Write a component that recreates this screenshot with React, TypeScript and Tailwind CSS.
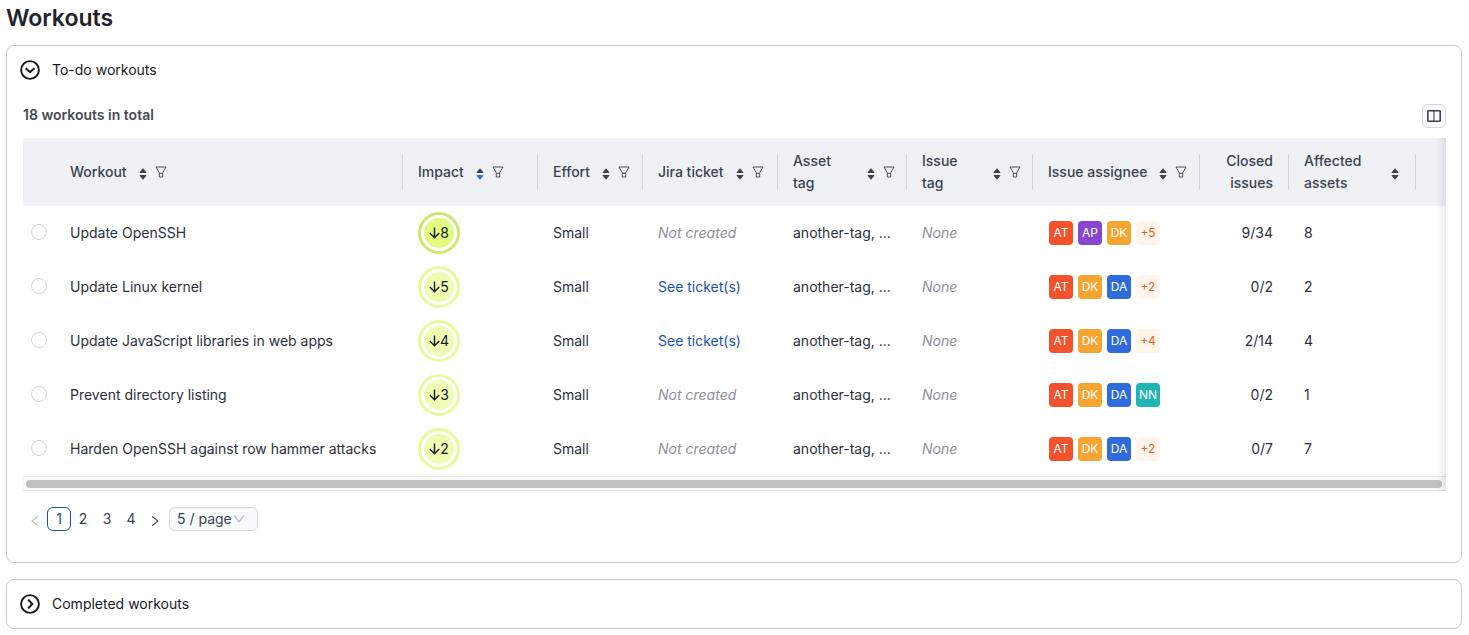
import React from "react";
import { AiOutlineLeft, AiOutlineRight, AiOutlineDown } from "react-icons/ai";

type Tone = "AT" | "AP" | "DK" | "DA" | "NN";

const TONES: Record<Tone, string> = {
  AT: "bg-[#f4522d]",
  AP: "bg-[#8746d2]",
  DK: "bg-[#f6a531]",
  DA: "bg-[#2f6bdb]",
  NN: "bg-[#1fb5b5]",
};

type Workout = {
  name: string;
  impact: number;
  ticket: boolean;
  people: Tone[];
  more?: number;
  closed: string;
  assets: number;
};

const WORKOUTS: Workout[] = [
  { name: "Update OpenSSH", impact: 8, ticket: false, people: ["AT", "AP", "DK"], more: 5, closed: "9/34", assets: 8 },
  { name: "Update Linux kernel", impact: 5, ticket: true, people: ["AT", "DK", "DA"], more: 2, closed: "0/2", assets: 2 },
  { name: "Update JavaScript libraries in web apps", impact: 4, ticket: true, people: ["AT", "DK", "DA"], more: 4, closed: "2/14", assets: 4 },
  { name: "Prevent directory listing", impact: 3, ticket: false, people: ["AT", "DK", "DA", "NN"], closed: "0/2", assets: 1 },
  { name: "Harden OpenSSH against row hammer attacks", impact: 2, ticket: false, people: ["AT", "DK", "DA"], more: 2, closed: "0/7", assets: 7 },
];

type Column = { label: string; width: string; sort?: boolean; filter?: boolean; sorted?: boolean; spread?: boolean; right?: boolean };

const COLUMNS: Column[] = [
  { label: "Workout", width: "w-auto", sort: true, filter: true },
  { label: "Impact", width: "w-[135px]", sort: true, filter: true, sorted: true },
  { label: "Effort", width: "w-[105px]", sort: true, filter: true },
  { label: "Jira ticket", width: "w-[135px]", sort: true, filter: true },
  { label: "Asset tag", width: "w-[129px]", sort: true, filter: true, spread: true },
  { label: "Issue tag", width: "w-[126px]", sort: true, filter: true, spread: true },
  { label: "Issue assignee", width: "w-[167px]", sort: true, filter: true },
  { label: "Closed issues", width: "w-[89px]", right: true },
  { label: "Affected assets", width: "w-[127px]", sort: true, spread: true },
];

function HeaderCell({ label, sort, filter, sorted, spread, right }: Column) {
  return (
    <th scope="col" className="h-[68px] p-0 font-medium">
      <div className={`flex h-9 items-center border-r border-[#d3d5da] pl-[15px] ${right ? "justify-end pr-[15px] text-right" : spread ? "justify-between pr-[11px]" : ""}`}>
        <span className={spread || right ? "w-[60px] leading-[22px]" : "whitespace-nowrap leading-[22px]"}>{label}</span>
        {(sort || filter) && (
          <span className={`flex items-center gap-2 ${spread ? "" : "ml-3"} ${filter ? "" : "pr-[5px]"}`}>
            {sort && (
              <button type="button" aria-label={`Sort by ${label}`} className="pt-[3px]">
                <svg viewBox="0 0 8 12" className="h-3 w-2" fill="currentColor" aria-hidden="true">
                  <path d="M4 0.5Q4.3 0.5 4.5 0.8L7.3 4.2Q7.7 4.9 7 5H1Q0.3 4.9 0.7 4.2L3.5 0.8Q3.7 0.5 4 0.5Z" />
                  <path className={sorted ? "text-[#2f6bdb]" : ""} fill="currentColor" d="M4 11.5Q4.3 11.5 4.5 11.2L7.3 7.8Q7.7 7.1 7 7H1Q0.3 7.1 0.7 7.8L3.5 11.2Q3.7 11.5 4 11.5Z" />
                </svg>
              </button>
            )}
            {filter && (
              <button type="button" aria-label={`Filter by ${label}`}>
                <svg viewBox="0 0 12 12" className="size-3" fill="none" stroke="currentColor" strokeLinejoin="round" aria-hidden="true">
                  <path d="M1 1H11L7.7 6.8V11H4.3V6.8ZM4.3 7.3H7.7" strokeWidth="0.9" />
                </svg>
              </button>
            )}
          </span>
        )}
      </div>
    </th>
  );
}

function Impact({ value }: { value: number }) {
  const strong = value >= 8;
  return (
    <span className={`flex size-[42px] items-center justify-center rounded-full border-3 p-[3px] ${strong ? "border-[#cbe86d]" : "border-[#e9fa9d]"}`}>
      <span className={`flex size-full items-center justify-center rounded-full text-[#16191f] ${strong ? "bg-[#e2fa7f]" : "bg-[#effcb4]"}`}>
        <svg viewBox="0 0 11 12" className="h-3 w-[11px]" fill="none" stroke="currentColor" strokeWidth="1.4" aria-hidden="true">
          <path d="M5.5 0.5V10.5M0.8 6L5.5 10.7L10.2 6" />
        </svg>
        {value}
      </span>
    </span>
  );
}

function Chevron({ open }: { open: boolean }) {
  return (
    <svg viewBox="0 0 20 20" className="size-5" fill="none" stroke="currentColor" strokeWidth="1.9" aria-hidden="true">
      <circle cx="10" cy="10" r="8.9" />
      <path strokeWidth="2.1" d={open ? "M5.6 8.2L10 12.2L14.4 8.2" : "M8.2 5.6L12.2 10L8.2 14.4"} />
    </svg>
  );
}

function Panel({ title, open, children }: { title: string; open: boolean; children?: React.ReactNode }) {
  return (
    <section className="rounded-lg border border-[#cbcbcd]">
      <button type="button" aria-expanded={open} className="flex h-12 w-full items-center gap-3 pl-[13px] text-left text-[#16191f]">
        <Chevron open={open} />
        {title}
      </button>
      {children}
    </section>
  );
}

export default function App() {
  return (
    <main className="pt-[2px] pr-[7px] pb-[6px] pl-[6px] font-[Inter,sans-serif] text-sm leading-[22px] text-[#2b303b]">
      <h1 className="mb-[11px] text-[23px] leading-8 font-semibold text-[#1f232b]">Workouts</h1>
      <div className="flex flex-col gap-4">
        <Panel title="To-do workouts" open>
          <div className="pr-[15px] pb-[31px] pl-4">
            <div className="flex items-start justify-between pt-[10px] pb-[10px]">
              <h2 className="font-semibold text-[#454a55]">18 workouts in total</h2>
              <button type="button" aria-label="Choose columns" className="flex size-6 items-center justify-center rounded-md border border-[#d3d5da] bg-[#f9fafc] text-[#3c424e]">
                <svg viewBox="0 0 14 12" className="h-3 w-3.5" fill="none" stroke="currentColor" strokeWidth="1.6" aria-hidden="true">
                  <rect x="0.8" y="0.8" width="12.4" height="10.4" rx="0.6" />
                  <path d="M7 1V11" strokeWidth="1.1" />
                </svg>
              </button>
            </div>
            <div className="relative">
              <table className="w-full table-fixed border-collapse text-left">
                <colgroup>
                  <col className="w-8" />
                  {COLUMNS.map((c) => (
                    <col key={c.label} className={c.width} />
                  ))}
                  <col className="w-[30px]" />
                </colgroup>
                <thead className="bg-[#eff1f5] text-[#3c424e]">
                  <tr>
                    <td className="p-0" />
                    {COLUMNS.map((c) => (
                      <HeaderCell key={c.label} {...c} />
                    ))}
                    <td className="p-0" />
                  </tr>
                </thead>
                <tbody>
                  {WORKOUTS.map((w) => (
                    <tr key={w.name} className="h-[54px]">
                      <td className="p-0 pb-0.5">
                        <input type="radio" name="workout" aria-label={w.name} className="ml-2 block size-4 appearance-none rounded-full border border-[#d3d5da] bg-white" />
                      </td>
                      <td className="truncate p-0 pl-[15px]">{w.name}</td>
                      <td className="p-0 pl-[15px]"><Impact value={w.impact} /></td>
                      <td className="p-0 pl-[15px]">Small</td>
                      <td className="p-0 pl-[15px]">
                        {w.ticket ? <a href="#tickets" className="text-[#1b53a8]">See ticket(s)</a> : <em className="text-[#8b8f97]">Not created</em>}
                      </td>
                      <td className="p-0 pl-[15px]">another-tag, ...</td>
                      <td className="p-0 pl-[15px]"><em className="text-[#8b8f97]">None</em></td>
                      <td className="p-0 pl-4">
                        <div className="flex gap-[5px] text-xs">
                          {w.people.map((p) => (
                            <span key={p} className={`flex size-6 items-center justify-center rounded-sm text-white ${TONES[p]}`}>{p}</span>
                          ))}
                          {w.more && <span className="flex size-6 items-center justify-center rounded-sm bg-[#fff5eb] text-[#d9682f]">+{w.more}</span>}
                        </div>
                      </td>
                      <td className="p-0 pr-4 text-right">{w.closed}</td>
                      <td className="p-0 pl-[15px]">{w.assets}</td>
                      <td className="p-0" />
                    </tr>
                  ))}
                </tbody>
              </table>
              <div className="flex h-[15px] items-center border-y border-[#e6e6e6] bg-[#fafafa] pr-1 pl-[3px]">
                <div className="h-2 w-full rounded-full bg-[#c1c1c1]" />
              </div>
              <div className="pointer-events-none absolute inset-y-0 right-0 w-[10px] bg-linear-to-r from-black/0 to-black/8" />
            </div>
            <nav aria-label="Pages" className="mt-4 flex items-center text-[#3c424e]">
              <button type="button" aria-label="Previous page" disabled className="flex size-6 items-center justify-center pt-1 text-[#b9bbc0]"><AiOutlineLeft className="size-[14px]" /></button>
              <button type="button" aria-current="page" className="size-6 rounded-md border border-[#1b53a8] leading-[22px] text-[#1b53a8]">1</button>
              <button type="button" className="size-6">2</button>
              <button type="button" className="size-6">3</button>
              <button type="button" className="size-6">4</button>
              <button type="button" aria-label="Next page" className="flex size-6 items-center justify-center pt-1"><AiOutlineRight className="size-[14px]" /></button>
              <div className="relative ml-[2px]">
                <select aria-label="Page size" className="block h-6 w-[89px] appearance-none rounded-md border border-[#d3d5da] bg-[#f9fafc] pl-[7px] leading-[22px]">
                  <option>5 / page</option>
                </select>
                <AiOutlineDown className="pointer-events-none absolute top-[5px] right-3 size-[14px] text-[#b0b3b9]" />
              </div>
            </nav>
          </div>
        </Panel>
        <Panel title="Completed workouts" open={false} />
      </div>
    </main>
  );
}
